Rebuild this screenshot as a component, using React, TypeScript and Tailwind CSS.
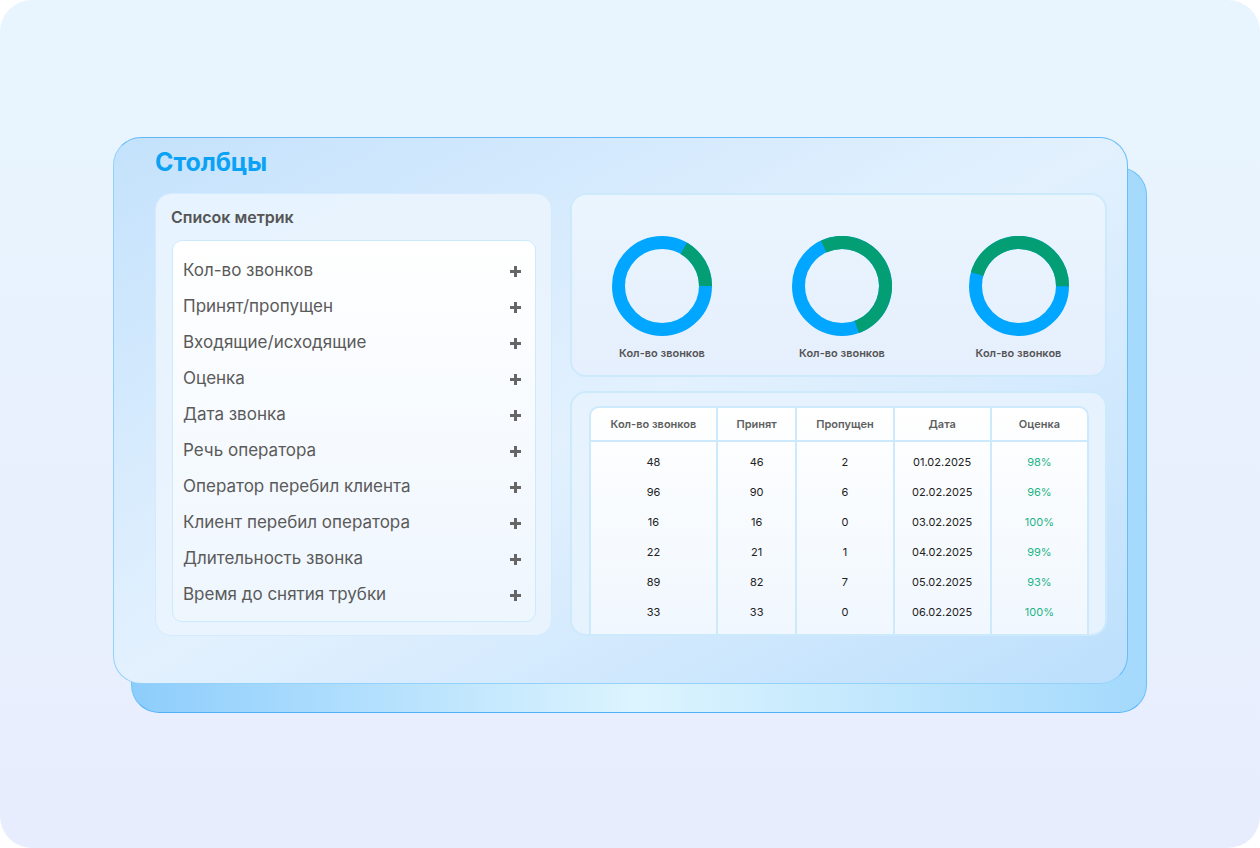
import React from "react"

const metrics = [
  "Кол-во звонков",
  "Принят/пропущен",
  "Входящие/исходящие",
  "Оценка",
  "Дата звонка",
  "Речь оператора",
  "Оператор перебил клиента",
  "Клиент перебил оператора",
  "Длительность звонка",
  "Время до снятия трубки",
]

const rows = [
  ["48", "46", "2", "01.02.2025", "98%"],
  ["96", "90", "6", "02.02.2025", "96%"],
  ["16", "16", "0", "03.02.2025", "100%"],
  ["22", "21", "1", "04.02.2025", "99%"],
  ["89", "82", "7", "05.02.2025", "93%"],
  ["33", "33", "0", "06.02.2025", "100%"],
]

const headers = ["Кол-во звонков", "Принят", "Пропущен", "Дата", "Оценка"]
const colWidths = ["w-[126px]", "w-[80px]", "w-[98px]", "w-[98px]", "w-[98px]"]

// green arc given as start / end angle in degrees, clockwise from 12 o'clock
const donuts = [
  { from: 30, to: 90, w: "w-[180px]" },
  { from: -25, to: 160, w: "w-[180px]" },
  { from: -74, to: 90, w: "w-[173px]" },
]

function Plus() {
  return (
    <svg width="13" height="13" viewBox="0 0 13 13" className="shrink-0">
      <path d="M6.5 1v11M1 6.5h11" stroke="#666" strokeWidth="3" />
    </svg>
  )
}

function Donut({ from, to }: { from: number; to: number }) {
  const r = 43.5
  const c = 2 * Math.PI * r
  const len = ((to - from) / 360) * c
  return (
    <svg width="100" height="100" viewBox="0 0 100 100">
      <circle cx="50" cy="50" r={r} fill="none" stroke="#00a6ff" strokeWidth="13" />
      <circle
        cx="50"
        cy="50"
        r={r}
        fill="none"
        stroke="#039e74"
        strokeWidth="13"
        strokeDasharray={`${len} ${c}`}
        transform={`rotate(${from - 90} 50 50)`}
      />
    </svg>
  )
}

export default function App() {
  return (
    <div className="w-[1260px] h-[848px] bg-white font-['Inter',sans-serif]">
      <div className="w-full h-full rounded-[32px] bg-gradient-to-b from-[#e8f5fe] to-[#e8edfd] pt-[137px] pl-[113px]">
        <div className="relative w-[1015px] h-[547px]">
          {/* back layer */}
          <div className="absolute left-[18px] top-[30px] w-[1016px] h-[546px] rounded-[28px] border-[1.5px] border-[#6ec2fa] border-b-[#4fb1f8] bg-gradient-to-r from-[#8dcdfc] via-[#dcf4fe] to-[#a3d9fc]" />

          <div className="relative h-full rounded-[28px] border-[1.5px] border-[#95d2fb] border-t-[#5fb9f9] border-r-[#66bdfa] bg-gradient-to-br from-[#c4e2fc] via-[#e3f1fe] to-[#bcdffc] pl-[41px] pr-[20px]">
            <h1 className="pt-[8px] h-[55px] text-[25px] leading-[32px] font-bold text-[#0ba2f6] tracking-[-0.1px]">
              Столбцы
            </h1>

            <div className="flex gap-[18px]">
              {/* metrics list */}
              <div className="w-[397px] h-[443px] rounded-[16px] border border-[#d3ebfd] bg-[#eaf4fe]/90 px-[15px] flex flex-col">
                <div className="h-[46px] flex items-center text-[16px] font-semibold text-[#555]">
                  Список метрик
                </div>
                <div className="ml-[1px] w-[364px] h-[382px] rounded-[10px] border-[1.5px] border-[#cdeafd] bg-gradient-to-b from-white to-[#eef6fe] pt-[12px] pl-[10px] pr-[13px]">
                  {metrics.map((m) => (
                    <div key={m} className="h-[36px] flex items-center justify-between">
                      <span className="text-[17px] text-[#5a5a5a]">{m}</span>
                      <Plus />
                    </div>
                  ))}
                </div>
              </div>

              <div className="w-[537px] flex flex-col gap-[14px]">
                {/* donuts */}
                <div className="h-[184px] rounded-[16px] border-2 border-[#cdeafd] bg-gradient-to-b from-[#eaf5fe] to-[#e6effd] flex pt-[41px]">
                  {donuts.map((d, i) => (
                    <div key={i} className={`${d.w} shrink-0 flex flex-col items-center`}>
                      <Donut from={d.from} to={d.to} />
                      <div className="mt-[9px] text-[11px] font-semibold text-[#555]">Кол-во звонков</div>
                    </div>
                  ))}
                </div>

                {/* table */}
                <div className="h-[245px] rounded-[16px] border-2 border-[#cdeafd] bg-[#e6f2fe] pl-[17px] pt-[13px] overflow-hidden">
                  <div className="w-[500px] h-[260px] flex rounded-t-[10px] border-2 border-[#cdeafd] bg-gradient-to-b from-white to-[#eef6fe] overflow-hidden">
                    {headers.map((h, ci) => (
                      <div
                        key={h}
                        className={`${colWidths[ci]} flex flex-col ${ci > 0 ? "border-l-2 border-[#cdeafd]" : ""}`}
                      >
                        <div className="h-[34px] flex items-center justify-center border-b-2 border-[#cdeafd] text-[11px] font-semibold text-[#5f5f5f]">
                          {h}
                        </div>
                        <div className="pt-[5px]">
                          {rows.map((r, ri) => (
                            <div
                              key={ri}
                              className={`h-[30px] flex items-center justify-center text-[11px] ${
                                ci === 4 ? "text-[#1fb386]" : "text-[#222]"
                              }`}
                            >
                              {r[ci]}
                            </div>
                          ))}
                        </div>
                      </div>
                    ))}
                  </div>
                </div>
              </div>
            </div>
          </div>
        </div>
      </div>
    </div>
  )
}
